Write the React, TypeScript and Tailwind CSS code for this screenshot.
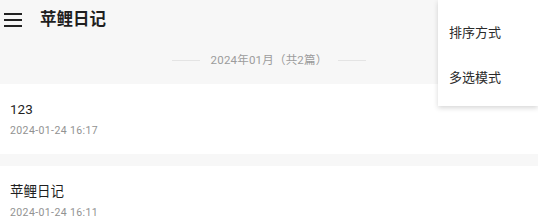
const entries = [
  { title: '123', time: '2024-01-24 16:17' },
  { title: '苹鲤日记', time: '2024-01-24 16:11' },
]

function MenuIcon() {
  return (
    <svg width="18" height="14" viewBox="0 0 18 14" className="block">
      <rect x="0" y="0" width="18" height="2" fill="#222" />
      <rect x="0" y="6" width="18" height="2" fill="#222" />
      <rect x="0" y="12" width="18" height="2" fill="#222" />
    </svg>
  )
}

export default function App() {
  return (
    <div
      className="relative h-[221px] w-[538px] overflow-hidden bg-[#f7f7f7]"
      style={{ fontFamily: 'Roboto, "Noto Sans CJK SC", sans-serif' }}
    >
      <header className="flex h-[40px] items-center pl-[4px]">
        <MenuIcon />
        <h1 className="ml-[18px] text-[16.5px] font-bold text-[#1f1f1f]">苹鲤日记</h1>
      </header>

      <div className="flex h-[44px] items-center justify-center gap-[11px] pb-[3px]">
        <div className="h-px w-[28px] bg-[#e4e4e4]" />
        <span className="text-[11.5px] tracking-[0.2px] text-[#9c9c9c]">2024年01月（共2篇）</span>
        <div className="h-px w-[28px] bg-[#e4e4e4]" />
      </div>

      <div className="flex flex-col gap-[12px]">
        {entries.map((e) => (
          <div key={e.time} className="flex h-[70px] flex-col justify-center bg-white px-[10px]">
            <div className="text-[13.5px] leading-[20px] text-[#1f1f1f]">{e.title}</div>
            <div className="mt-[4px] text-[10.5px] leading-[16px] tracking-[0.4px] text-[#929292]">{e.time}</div>
          </div>
        ))}
      </div>

      <div className="absolute right-0 top-0 flex w-[100px] flex-col bg-white pt-[10px] pb-[6px] shadow-[0_2px_5px_rgba(0,0,0,0.16)]">
        <div className="flex h-[45px] items-center pl-[11px] text-[13px] text-[#2a2a2a]">排序方式</div>
        <div className="flex h-[45px] items-center pl-[11px] text-[13px] text-[#2a2a2a]">多选模式</div>
      </div>
    </div>
  )
}
